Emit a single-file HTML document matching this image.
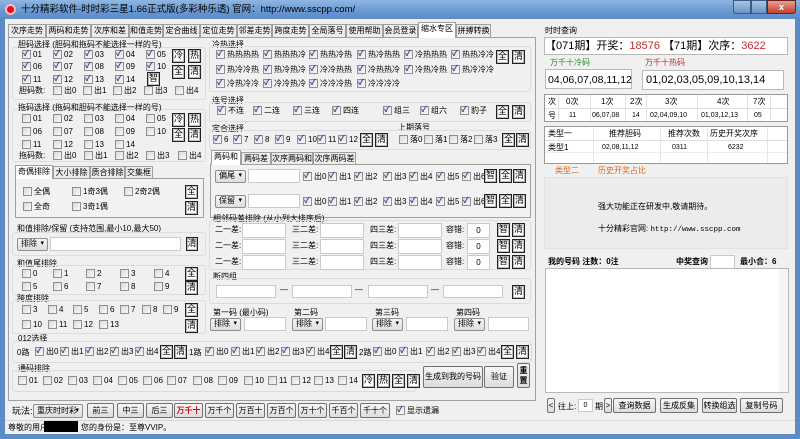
<!DOCTYPE html>
<html><head><meta charset="utf-8"><style>
*{margin:0;padding:0;box-sizing:border-box}
body{width:800px;height:439px;overflow:hidden;background:#5b8cc6;font-family:"Liberation Sans","Noto Sans CJK SC",sans-serif;font-size:8px;color:#000;position:relative}
#tb{position:absolute;left:0;top:0;width:800px;height:20px;background:linear-gradient(#8fb6e2,#6596d0 60%,#5a8bc6)}
#cl{position:absolute;left:5px;top:19px;width:790px;height:415px;background:#f0f0f0}
.a{position:absolute}
.t{position:absolute;white-space:nowrap;font-size:8px;line-height:10px}
.ck{position:absolute;white-space:nowrap;font-size:8px;line-height:10px;padding-left:11px}
.ck::before{content:"";position:absolute;left:0;top:0;width:9px;height:9px;border:1px solid #8f8f8f;background:linear-gradient(135deg,#d8d8d8,#fafafa);box-sizing:border-box}
.ck.on::after{content:"✓";position:absolute;left:1px;top:-1px;font-size:8px;color:#26408b;font-weight:bold}
.bt{position:absolute;border:1px solid #222;background:#fff;font-size:9px;text-align:center;line-height:11px;box-shadow:inset 0 0 0 1px #bbb}
.gb{position:absolute;border:1px solid #707070;border-radius:2px;background:linear-gradient(#f6f6f6,#dcdcdc);text-align:center;font-size:8px;white-space:nowrap}
.in{position:absolute;background:#fff;border:1px solid #c7cbd1}
.cb{position:absolute;border:1px solid #8e8f8f;border-radius:2px;background:linear-gradient(#f4f4f4,#dedede);font-size:8px;line-height:10px;padding-left:3px;white-space:nowrap}
.cb::after{content:"▾";position:absolute;right:3px;top:0;font-size:7px}
.g{position:absolute;border:1px solid #dcdcdc;border-radius:3px}
.tab{position:absolute;border:1px solid #a0a0a0;border-bottom:none;background:#ececec;font-size:8px;text-align:center;line-height:12px;white-space:nowrap;overflow:hidden}
</style></head><body>
<div id="tb">
<div class="a" style="left:5px;top:4px;width:11px;height:11px;border-radius:50%;background:#d12;border:2px solid #fbb"></div>
<div class="t" style="left:21px;top:4px;font-size:9.5px;line-height:12px">十分精彩软件-时时彩三星1.66正式版(多彩种乐透) 官网：http://www.sscpp.com/</div>
<div class="a" style="left:733px;top:0;width:18px;height:14px;border:1px solid #3a5a80;background:linear-gradient(#a9c4e4,#6c93c4);border-radius:0 0 0 3px"></div>
<div class="a" style="left:751px;top:0;width:16px;height:14px;border:1px solid #3a5a80;background:linear-gradient(#a9c4e4,#6c93c4)"></div>
<div class="a" style="left:767px;top:0;width:29px;height:14px;border:1px solid #6b2020;background:linear-gradient(#e8a090,#c6402c);border-radius:0 0 3px 0;color:#fff;font-size:9px;text-align:center;line-height:12px;font-weight:bold">x</div>
</div>
<div id="cl"></div>

<div class="a" style="left:8px;top:37px;width:528px;height:364px;border:1px solid #a0a0a0;background:#f0f0f0"></div>
<div class="tab" style="left:8px;top:24px;width:38px;height:13px">次序走势</div>
<div class="tab" style="left:46px;top:24px;width:45px;height:13px">两码和走势</div>
<div class="tab" style="left:91px;top:24px;width:38px;height:13px">次序和差</div>
<div class="tab" style="left:129px;top:24px;width:34px;height:13px">和值走势</div>
<div class="tab" style="left:163px;top:24px;width:37px;height:13px">定合曲线</div>
<div class="tab" style="left:200px;top:24px;width:37px;height:13px">定位走势</div>
<div class="tab" style="left:237px;top:24px;width:35px;height:13px">邻差走势</div>
<div class="tab" style="left:272px;top:24px;width:37px;height:13px">跨度走势</div>
<div class="tab" style="left:309px;top:24px;width:37px;height:13px">全局落号</div>
<div class="tab" style="left:346px;top:24px;width:37px;height:13px">使用帮助</div>
<div class="tab" style="left:383px;top:24px;width:35px;height:13px">会员登录</div>
<div class="tab" style="left:418px;top:22px;width:38px;height:16px;background:#fff">缩水专区</div>
<div class="tab" style="left:456px;top:24px;width:35px;height:13px">拼搏转换</div>

<div class="g" style="left:12px;top:47px;width:194px;height:53px"></div>
<div class="t" style="left:18px;top:40px">胆码选择 (胆码和拖码不能选择一样的号)</div>
<span class="ck on" style="left:22px;top:50px">01</span><span class="ck on" style="left:53px;top:50px">02</span><span class="ck on" style="left:84px;top:50px">03</span><span class="ck on" style="left:115px;top:50px">04</span><span class="ck on" style="left:146px;top:50px">05</span>
<span class="ck on" style="left:22px;top:62px">06</span><span class="ck on" style="left:53px;top:62px">07</span><span class="ck on" style="left:84px;top:62px">08</span><span class="ck on" style="left:115px;top:62px">09</span><span class="ck on" style="left:146px;top:62px">10</span>
<span class="ck on" style="left:22px;top:75px">11</span><span class="ck on" style="left:53px;top:75px">12</span><span class="ck on" style="left:84px;top:75px">13</span><span class="ck on" style="left:115px;top:75px">14</span>
<div class="bt" style="left:147px;top:72px;width:13px;height:14px">智</div>
<div class="bt" style="left:172px;top:49px;width:13px;height:14px">冷</div><div class="bt" style="left:188px;top:49px;width:13px;height:14px">热</div>
<div class="bt" style="left:172px;top:65px;width:13px;height:14px">全</div><div class="bt" style="left:188px;top:65px;width:13px;height:14px">清</div>
<div class="t" style="left:19px;top:86px">胆码数:</div>
<span class="ck" style="left:53px;top:86px">出0</span><span class="ck" style="left:83px;top:86px">出1</span><span class="ck" style="left:113px;top:86px">出2</span><span class="ck" style="left:144px;top:86px">出3</span><span class="ck" style="left:175px;top:86px">出4</span>

<div class="g" style="left:12px;top:109px;width:194px;height:53px"></div>
<div class="t" style="left:18px;top:103px">拖码选择 (拖码和胆码不能选择一样的号)</div>
<span class="ck" style="left:22px;top:114px">01</span><span class="ck" style="left:53px;top:114px">02</span><span class="ck" style="left:84px;top:114px">03</span><span class="ck" style="left:115px;top:114px">04</span><span class="ck" style="left:146px;top:114px">05</span>
<span class="ck" style="left:22px;top:127px">06</span><span class="ck" style="left:53px;top:127px">07</span><span class="ck" style="left:84px;top:127px">08</span><span class="ck" style="left:115px;top:127px">09</span><span class="ck" style="left:146px;top:127px">10</span>
<span class="ck" style="left:22px;top:140px">11</span><span class="ck" style="left:53px;top:140px">12</span><span class="ck" style="left:84px;top:140px">13</span><span class="ck" style="left:115px;top:140px">14</span>
<div class="bt" style="left:172px;top:113px;width:13px;height:14px">冷</div><div class="bt" style="left:188px;top:113px;width:13px;height:14px">热</div>
<div class="bt" style="left:172px;top:128px;width:13px;height:14px">全</div><div class="bt" style="left:188px;top:128px;width:13px;height:14px">清</div>
<div class="t" style="left:19px;top:151px">拖码数:</div>
<span class="ck" style="left:53px;top:151px">出0</span><span class="ck" style="left:84px;top:151px">出1</span><span class="ck" style="left:115px;top:151px">出2</span><span class="ck" style="left:146px;top:151px">出3</span><span class="ck" style="left:178px;top:151px">出4</span>

<div class="a" style="left:15px;top:178px;width:189px;height:40px;border:1px solid #a0a0a0;background:#f2f2f2"></div>
<div class="tab" style="left:15px;top:165px;width:38px;height:14px;background:#fff">奇偶排除</div>
<div class="tab" style="left:53px;top:166px;width:37px;height:12px">大小排除</div>
<div class="tab" style="left:90px;top:166px;width:35px;height:12px">质合排除</div>
<div class="tab" style="left:125px;top:166px;width:28px;height:12px">交集框</div>
<span class="ck" style="left:23px;top:187px">全偶</span><span class="ck" style="left:72px;top:187px">1奇3偶</span><span class="ck" style="left:124px;top:187px">2奇2偶</span>
<span class="ck" style="left:23px;top:202px">全奇</span><span class="ck" style="left:72px;top:202px">3奇1偶</span>
<div class="bt" style="left:185px;top:185px;width:13px;height:14px">全</div><div class="bt" style="left:185px;top:201px;width:13px;height:14px">清</div>

<div class="t" style="left:17px;top:224px">和值排除/保留 (支持范围,最小10,最大50)</div>
<div class="g" style="left:12px;top:232px;width:194px;height:24px"></div>
<div class="cb" style="left:17px;top:238px;width:31px;height:13px">排除</div>
<div class="in" style="left:50px;top:237px;width:131px;height:14px"></div>
<div class="bt" style="left:186px;top:237px;width:12px;height:14px">清</div>
<div class="t" style="left:17px;top:259px">和值尾排除</div>
<div class="g" style="left:12px;top:265px;width:194px;height:30px"></div>
<span class="ck" style="left:22px;top:269px">0</span><span class="ck" style="left:53px;top:269px">1</span><span class="ck" style="left:86px;top:269px">2</span><span class="ck" style="left:120px;top:269px">3</span><span class="ck" style="left:154px;top:269px">4</span>
<span class="ck" style="left:22px;top:282px">5</span><span class="ck" style="left:53px;top:282px">6</span><span class="ck" style="left:86px;top:282px">7</span><span class="ck" style="left:120px;top:282px">8</span><span class="ck" style="left:154px;top:282px">9</span>
<div class="bt" style="left:185px;top:267px;width:13px;height:14px">全</div><div class="bt" style="left:185px;top:281px;width:13px;height:14px">清</div>
<div class="t" style="left:17px;top:294px">跨度排除</div>
<div class="g" style="left:12px;top:300px;width:194px;height:34px"></div>
<span class="ck" style="left:22px;top:305px">3</span><span class="ck" style="left:48px;top:305px">4</span><span class="ck" style="left:73px;top:305px">5</span><span class="ck" style="left:99px;top:305px">6</span><span class="ck" style="left:120px;top:305px">7</span><span class="ck" style="left:142px;top:305px">8</span><span class="ck" style="left:163px;top:305px">9</span>
<span class="ck" style="left:22px;top:320px">10</span><span class="ck" style="left:48px;top:320px">11</span><span class="ck" style="left:73px;top:320px">12</span><span class="ck" style="left:99px;top:320px">13</span>
<div class="bt" style="left:185px;top:303px;width:13px;height:14px">全</div><div class="bt" style="left:185px;top:319px;width:13px;height:14px">清</div>

<div class="t" style="left:18px;top:334px">012选择</div>
<div class="g" style="left:12px;top:341px;width:520px;height:22px"></div>
<div class="t" style="left:17px;top:348px">0路</div>
<span class="ck on" style="left:35px;top:347px">出0</span><span class="ck on" style="left:60px;top:347px">出1</span><span class="ck on" style="left:85px;top:347px">出2</span><span class="ck on" style="left:110px;top:347px">出3</span><span class="ck on" style="left:135px;top:347px">出4</span>
<div class="bt" style="left:160px;top:345px;width:13px;height:14px">全</div><div class="bt" style="left:174px;top:345px;width:13px;height:14px">清</div>
<div class="t" style="left:189px;top:348px">1路</div>
<span class="ck on" style="left:205px;top:347px">出0</span><span class="ck on" style="left:231px;top:347px">出1</span><span class="ck on" style="left:256px;top:347px">出2</span><span class="ck on" style="left:281px;top:347px">出3</span><span class="ck on" style="left:306px;top:347px">出4</span>
<div class="bt" style="left:330px;top:345px;width:13px;height:14px">全</div><div class="bt" style="left:344px;top:345px;width:13px;height:14px">清</div>
<div class="t" style="left:359px;top:348px">2路</div>
<span class="ck on" style="left:373px;top:347px">出0</span><span class="ck on" style="left:399px;top:347px">出1</span><span class="ck on" style="left:426px;top:347px">出2</span><span class="ck on" style="left:452px;top:347px">出3</span><span class="ck on" style="left:477px;top:347px">出4</span>
<div class="bt" style="left:501px;top:345px;width:13px;height:14px">全</div><div class="bt" style="left:516px;top:345px;width:13px;height:14px">清</div>

<div class="t" style="left:18px;top:364px">通码排除</div>
<div class="g" style="left:12px;top:370px;width:404px;height:22px"></div>
<span class="ck" style="left:18px;top:376px">01</span><span class="ck" style="left:43px;top:376px">02</span><span class="ck" style="left:68px;top:376px">03</span><span class="ck" style="left:93px;top:376px">04</span><span class="ck" style="left:118px;top:376px">05</span><span class="ck" style="left:143px;top:376px">06</span><span class="ck" style="left:167px;top:376px">07</span><span class="ck" style="left:193px;top:376px">08</span><span class="ck" style="left:218px;top:376px">09</span><span class="ck" style="left:244px;top:376px">10</span><span class="ck" style="left:268px;top:376px">11</span><span class="ck" style="left:291px;top:376px">12</span><span class="ck" style="left:314px;top:376px">13</span><span class="ck" style="left:338px;top:376px">14</span>
<div class="bt" style="left:362px;top:374px;width:13px;height:14px">冷</div><div class="bt" style="left:377px;top:374px;width:13px;height:14px">热</div><div class="bt" style="left:392px;top:374px;width:13px;height:14px">全</div><div class="bt" style="left:407px;top:374px;width:13px;height:14px">清</div>
<div class="gb" style="left:423px;top:366px;width:60px;height:22px;line-height:20px">生成到我的号码</div>
<div class="gb" style="left:484px;top:366px;width:30px;height:22px;line-height:20px">验证</div>
<div class="gb" style="left:517px;top:363px;width:13px;height:25px;line-height:10px;padding-top:2px;font-weight:bold;white-space:normal">重置</div>

<div class="t" style="left:212px;top:40px">冷热选择</div>
<div class="g" style="left:209px;top:46px;width:322px;height:46px"></div>
<span class="ck on" style="left:216px;top:50px">热热热热</span><span class="ck on" style="left:263px;top:50px">热热热冷</span><span class="ck on" style="left:309px;top:50px">热热冷热</span><span class="ck on" style="left:357px;top:50px">热冷热热</span><span class="ck on" style="left:404px;top:50px">冷热热热</span><span class="ck on" style="left:451px;top:50px">热热冷冷</span>
<span class="ck on" style="left:216px;top:65px">热冷冷热</span><span class="ck on" style="left:263px;top:65px">热冷热冷</span><span class="ck on" style="left:309px;top:65px">冷冷热热</span><span class="ck on" style="left:357px;top:65px">冷热热冷</span><span class="ck on" style="left:404px;top:65px">冷热冷热</span><span class="ck on" style="left:451px;top:65px">热冷冷冷</span>
<span class="ck on" style="left:216px;top:79px">冷热冷冷</span><span class="ck on" style="left:263px;top:79px">冷冷热冷</span><span class="ck on" style="left:309px;top:79px">冷冷冷热</span><span class="ck on" style="left:357px;top:79px">冷冷冷冷</span>
<div class="bt" style="left:496px;top:50px;width:13px;height:14px">全</div><div class="bt" style="left:512px;top:50px;width:13px;height:14px">清</div>
<div class="t" style="left:212px;top:96px">连号选择</div>
<div class="g" style="left:209px;top:102px;width:322px;height:20px"></div>
<span class="ck on" style="left:217px;top:106px">不连</span><span class="ck on" style="left:253px;top:106px">二连</span><span class="ck on" style="left:293px;top:106px">三连</span><span class="ck on" style="left:332px;top:106px">四连</span><span class="ck on" style="left:383px;top:106px">组三</span><span class="ck on" style="left:420px;top:106px">组六</span><span class="ck on" style="left:460px;top:106px">豹子</span>
<div class="bt" style="left:496px;top:105px;width:13px;height:14px">全</div><div class="bt" style="left:512px;top:105px;width:13px;height:14px">清</div>
<div class="t" style="left:212px;top:124px">定合选择</div>
<div class="t" style="left:398px;top:123px">上期落号</div>
<div class="g" style="left:209px;top:130px;width:322px;height:20px"></div>
<span class="ck on" style="left:213px;top:135px">6</span><span class="ck on" style="left:233px;top:135px">7</span><span class="ck on" style="left:254px;top:135px">8</span><span class="ck on" style="left:275px;top:135px">9</span><span class="ck on" style="left:297px;top:135px">10</span><span class="ck on" style="left:317px;top:135px">11</span><span class="ck on" style="left:338px;top:135px">12</span>
<div class="bt" style="left:360px;top:133px;width:13px;height:14px">全</div><div class="bt" style="left:375px;top:133px;width:13px;height:14px">清</div>
<span class="ck" style="left:399px;top:135px">落0</span><span class="ck" style="left:424px;top:135px">落1</span><span class="ck" style="left:449px;top:135px">落2</span><span class="ck" style="left:474px;top:135px">落3</span>
<div class="bt" style="left:502px;top:133px;width:13px;height:14px">全</div><div class="bt" style="left:516px;top:133px;width:13px;height:14px">清</div>

<div class="a" style="left:210px;top:164px;width:321px;height:54px;border:1px solid #a0a0a0;background:#f2f2f2"></div>
<div class="tab" style="left:211px;top:150px;width:30px;height:15px;background:#fff">两码和</div>
<div class="tab" style="left:241px;top:152px;width:30px;height:12px">两码差</div>
<div class="tab" style="left:271px;top:152px;width:42px;height:12px">次序两码和</div>
<div class="tab" style="left:313px;top:152px;width:43px;height:12px">次序两码差</div>
<div class="cb" style="left:215px;top:170px;width:31px;height:13px">偏尾</div>
<div class="in" style="left:248px;top:169px;width:52px;height:14px"></div>
<span class="ck on" style="left:303px;top:172px">出0</span><span class="ck on" style="left:328px;top:172px">出1</span><span class="ck on" style="left:354px;top:172px">出2</span><span class="ck on" style="left:383px;top:172px">出3</span><span class="ck on" style="left:409px;top:172px">出4</span><span class="ck on" style="left:436px;top:172px">出5</span><span class="ck on" style="left:462px;top:172px">出6</span>
<div class="bt" style="left:484px;top:169px;width:13px;height:14px">智</div><div class="bt" style="left:499px;top:169px;width:13px;height:14px">全</div><div class="bt" style="left:513px;top:169px;width:13px;height:14px">清</div>
<div class="cb" style="left:215px;top:195px;width:31px;height:13px">保留</div>
<div class="in" style="left:248px;top:194px;width:52px;height:14px"></div>
<span class="ck on" style="left:303px;top:197px">出0</span><span class="ck on" style="left:328px;top:197px">出1</span><span class="ck on" style="left:354px;top:197px">出2</span><span class="ck on" style="left:383px;top:197px">出3</span><span class="ck on" style="left:409px;top:197px">出4</span><span class="ck on" style="left:436px;top:197px">出5</span><span class="ck on" style="left:462px;top:197px">出6</span>
<div class="bt" style="left:484px;top:194px;width:13px;height:14px">智</div><div class="bt" style="left:499px;top:194px;width:13px;height:14px">全</div><div class="bt" style="left:513px;top:194px;width:13px;height:14px">清</div>

<div class="t" style="left:213px;top:214px">相邻码差排除 (从小到大排序后)</div>
<div class="g" style="left:209px;top:220px;width:322px;height:50px"></div>
<div class="t" style="left:215px;top:225px">二一差:</div><div class="in" style="left:242px;top:223px;width:44px;height:15px"></div>
<div class="t" style="left:292px;top:225px">三二差:</div><div class="in" style="left:320px;top:223px;width:44px;height:15px"></div>
<div class="t" style="left:370px;top:225px">四三差:</div><div class="in" style="left:398px;top:223px;width:44px;height:15px"></div>
<div class="t" style="left:446px;top:225px">容错:</div><div class="in" style="left:467px;top:223px;width:23px;height:15px;text-align:center;font-size:8px;line-height:13px">0</div>
<div class="bt" style="left:497px;top:223px;width:13px;height:14px">智</div><div class="bt" style="left:512px;top:223px;width:13px;height:14px">清</div>
<div class="t" style="left:215px;top:241px">二一差:</div><div class="in" style="left:242px;top:239px;width:44px;height:15px"></div>
<div class="t" style="left:292px;top:241px">三二差:</div><div class="in" style="left:320px;top:239px;width:44px;height:15px"></div>
<div class="t" style="left:370px;top:241px">四三差:</div><div class="in" style="left:398px;top:239px;width:44px;height:15px"></div>
<div class="t" style="left:446px;top:241px">容错:</div><div class="in" style="left:467px;top:239px;width:23px;height:15px;text-align:center;font-size:8px;line-height:13px">0</div>
<div class="bt" style="left:497px;top:239px;width:13px;height:14px">智</div><div class="bt" style="left:512px;top:239px;width:13px;height:14px">清</div>
<div class="t" style="left:215px;top:257px">二一差:</div><div class="in" style="left:242px;top:255px;width:44px;height:15px"></div>
<div class="t" style="left:292px;top:257px">三二差:</div><div class="in" style="left:320px;top:255px;width:44px;height:15px"></div>
<div class="t" style="left:370px;top:257px">四三差:</div><div class="in" style="left:398px;top:255px;width:44px;height:15px"></div>
<div class="t" style="left:446px;top:257px">容错:</div><div class="in" style="left:467px;top:255px;width:23px;height:15px;text-align:center;font-size:8px;line-height:13px">0</div>
<div class="bt" style="left:497px;top:255px;width:13px;height:14px">智</div><div class="bt" style="left:512px;top:255px;width:13px;height:14px">清</div>
<div class="t" style="left:213px;top:272px">断四组</div>
<div class="g" style="left:209px;top:278px;width:322px;height:26px"></div>
<div class="in" style="left:216px;top:285px;width:60px;height:13px"></div><div class="t" style="left:280px;top:285px">—</div>
<div class="in" style="left:292px;top:285px;width:60px;height:13px"></div><div class="t" style="left:355px;top:285px">—</div>
<div class="in" style="left:368px;top:285px;width:60px;height:13px"></div><div class="t" style="left:431px;top:285px">—</div>
<div class="in" style="left:443px;top:285px;width:60px;height:13px"></div>
<div class="bt" style="left:512px;top:285px;width:13px;height:14px">清</div>
<div class="t" style="left:213px;top:308px">第一码 (最小码)</div><div class="t" style="left:294px;top:308px">第二码</div><div class="t" style="left:375px;top:308px">第三码</div><div class="t" style="left:456px;top:308px">第四码</div>
<div class="cb" style="left:210px;top:318px;width:31px;height:13px">排除</div><div class="in" style="left:244px;top:317px;width:42px;height:14px"></div>
<div class="cb" style="left:292px;top:318px;width:31px;height:13px">排除</div><div class="in" style="left:325px;top:317px;width:42px;height:14px"></div>
<div class="cb" style="left:372px;top:318px;width:31px;height:13px">排除</div><div class="in" style="left:406px;top:317px;width:42px;height:14px"></div>
<div class="cb" style="left:454px;top:318px;width:31px;height:13px">排除</div><div class="in" style="left:488px;top:317px;width:41px;height:14px"></div>

<div class="t" style="left:12px;top:406px;font-size:9px">玩法:</div>
<div class="cb" style="left:33px;top:404px;width:50px;height:14px;line-height:12px">重庆时时彩</div>
<div class="gb" style="left:87px;top:403px;width:27px;height:15px;line-height:13px">前三</div>
<div class="gb" style="left:117px;top:403px;width:27px;height:15px;line-height:13px">中三</div>
<div class="gb" style="left:146px;top:403px;width:27px;height:15px;line-height:13px">后三</div>
<div class="gb" style="left:174px;top:403px;width:29px;height:15px;line-height:13px;color:#d01010;font-weight:bold">万千十</div>
<div class="gb" style="left:205px;top:403px;width:29px;height:15px;line-height:13px">万千个</div>
<div class="gb" style="left:236px;top:403px;width:29px;height:15px;line-height:13px">万百十</div>
<div class="gb" style="left:267px;top:403px;width:29px;height:15px;line-height:13px">万百个</div>
<div class="gb" style="left:298px;top:403px;width:29px;height:15px;line-height:13px">万十个</div>
<div class="gb" style="left:329px;top:403px;width:29px;height:15px;line-height:13px">千百个</div>
<div class="gb" style="left:360px;top:403px;width:30px;height:15px;line-height:13px">千十个</div>
<span class="ck on" style="left:396px;top:406px">显示遗漏</span>

<div class="a" style="left:5px;top:420px;width:790px;height:14px;border-top:1px solid #d8d8d8;background:#f0f0f0"></div>
<div class="t" style="left:8px;top:423px">尊敬的用户</div>
<div class="a" style="left:44px;top:421px;width:34px;height:11px;background:#000"></div>
<div class="t" style="left:81px;top:423px">您的身份是：至尊VVIP。</div>

<div class="t" style="left:545px;top:26px">时时查询</div>
<div class="a" style="left:544px;top:37px;width:244px;height:18px;background:#fff;border:1px solid #b8b8b8"></div>
<div class="t" style="left:545px;top:40px;font-size:11px;line-height:13px">【071期】开奖：<span style="color:#c0302c">18576</span> 【71期】次序：<span style="color:#c0302c">3622</span></div>
<div class="t" style="left:550px;top:58px;color:#2c8a2c">万千十冷码</div>
<div class="t" style="left:645px;top:58px;color:#c0302c">万千十热码</div>
<div class="a" style="left:545px;top:69px;width:87px;height:20px;background:#fff;border:1px solid #b8b8b8"></div>
<div class="t" style="left:548px;top:74px;font-size:10.5px;line-height:12px">04,06,07,08,11,12</div>
<div class="a" style="left:642px;top:70px;width:142px;height:20px;background:#fff;border:1px solid #b8b8b8"></div>
<div class="t" style="left:646px;top:74px;font-size:11px;line-height:12px">01,02,03,05,09,10,13,14</div>
<div class="a" style="left:544px;top:94px;width:244px;height:28px;background:#fff;border:1px solid #999"></div>
<div class="a" style="left:545px;top:108px;width:242px;height:1px;background:#e0e0e0"></div>
<div class="a" style="left:558px;top:95px;width:1px;height:26px;background:#e0e0e0"></div>
<div class="a" style="left:590px;top:95px;width:1px;height:26px;background:#e0e0e0"></div>
<div class="a" style="left:625px;top:95px;width:1px;height:26px;background:#e0e0e0"></div>
<div class="a" style="left:646px;top:95px;width:1px;height:26px;background:#e0e0e0"></div>
<div class="a" style="left:697px;top:95px;width:1px;height:26px;background:#e0e0e0"></div>
<div class="a" style="left:747px;top:95px;width:1px;height:26px;background:#e0e0e0"></div>
<div class="a" style="left:770px;top:95px;width:1px;height:26px;background:#e0e0e0"></div>
<div class="t" style="left:548px;top:97px">次</div><div class="t" style="left:566px;top:97px">0次</div><div class="t" style="left:601px;top:97px">1次</div><div class="t" style="left:630px;top:97px">2次</div><div class="t" style="left:665px;top:97px">3次</div><div class="t" style="left:717px;top:97px">4次</div><div class="t" style="left:753px;top:97px">7次</div>
<div class="t" style="left:548px;top:111px">号</div><div class="t" style="left:569px;top:111px;font-size:7px">11</div><div class="t" style="left:592px;top:111px;font-size:7px">06,07,08</div><div class="t" style="left:632px;top:111px;font-size:7px">14</div><div class="t" style="left:650px;top:111px;font-size:7px">02,04,09,10</div><div class="t" style="left:701px;top:111px;font-size:7px">01,03,12,13</div><div class="t" style="left:754px;top:111px;font-size:7px">05</div>
<div class="a" style="left:544px;top:126px;width:244px;height:38px;background:#fff;border:1px solid #999"></div>
<div class="a" style="left:545px;top:140px;width:242px;height:1px;background:#e0e0e0"></div>
<div class="a" style="left:545px;top:152px;width:242px;height:1px;background:#eee"></div>
<div class="a" style="left:593px;top:127px;width:1px;height:36px;background:#e6e6e6"></div>
<div class="a" style="left:660px;top:127px;width:1px;height:36px;background:#e6e6e6"></div>
<div class="a" style="left:707px;top:127px;width:1px;height:36px;background:#e6e6e6"></div>
<div class="a" style="left:767px;top:127px;width:1px;height:36px;background:#e6e6e6"></div>
<div class="t" style="left:548px;top:129px">类型一</div><div class="t" style="left:609px;top:129px">推荐胆码</div><div class="t" style="left:668px;top:129px">推荐次数</div><div class="t" style="left:710px;top:129px">历史开奖次序</div>
<div class="t" style="left:548px;top:143px">类型1</div><div class="t" style="left:602px;top:143px;font-size:7px">02,08,11,12</div><div class="t" style="left:672px;top:143px;font-size:7px">0311</div><div class="t" style="left:728px;top:143px;font-size:7px">6232</div>
<div class="a" style="left:544px;top:177px;width:244px;height:72px;background:#ececec;border:1px solid #e2e2e2"></div>
<div class="t" style="left:555px;top:166px;color:#d2691e">类型二</div>
<div class="t" style="left:598px;top:166px;color:#d2691e">历史开奖占比</div>
<div class="t" style="left:598px;top:202px">强大功能正在研发中,敬请期待。</div>
<div class="t" style="left:598px;top:224px">十分精彩官网: <span style="font-family:'Liberation Mono',monospace;font-size:7.5px">http://www.sscpp.com</span></div>
<div class="t" style="left:548px;top:257px;font-weight:bold">我的号码 注数：0注</div>
<div class="t" style="left:676px;top:257px;font-weight:bold">中奖查询</div>
<div class="in" style="left:710px;top:255px;width:25px;height:14px"></div>
<div class="t" style="left:740px;top:257px;font-weight:bold">最小合：6</div>
<div class="a" style="left:545px;top:268px;width:244px;height:125px;background:#fff;border:1px solid #b8b8b8"></div>
<div class="a" style="left:779px;top:269px;width:9px;height:123px;background:#f4f4f4"></div>
<div class="gb" style="left:547px;top:398px;width:8px;height:15px;line-height:13px">&lt;</div>
<div class="t" style="left:558px;top:402px">往上:</div>
<div class="in" style="left:578px;top:399px;width:15px;height:13px;text-align:center;font-size:7px;line-height:11px">0</div>
<div class="t" style="left:595px;top:402px">期</div>
<div class="gb" style="left:604px;top:398px;width:8px;height:15px;line-height:13px">&gt;</div>
<div class="gb" style="left:613px;top:398px;width:43px;height:15px;line-height:13px">查询数据</div>
<div class="gb" style="left:660px;top:398px;width:38px;height:15px;line-height:13px">生成反集</div>
<div class="gb" style="left:702px;top:398px;width:35px;height:15px;line-height:13px">转换组选</div>
<div class="gb" style="left:740px;top:398px;width:43px;height:15px;line-height:13px">复制号码</div>
</body></html>
